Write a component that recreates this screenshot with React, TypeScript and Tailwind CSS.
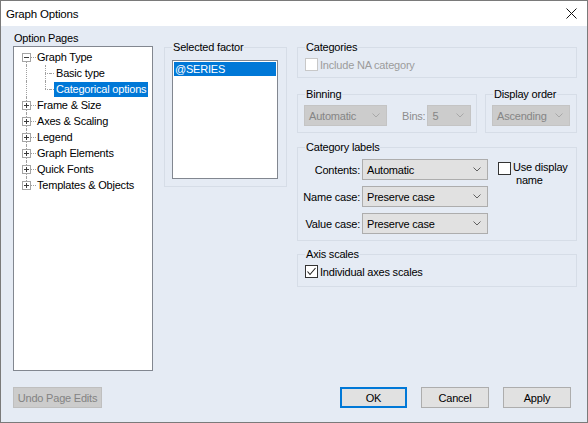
import clsx from 'clsx';

type TreeItem = { label: string; expanded?: boolean };

const topItems: TreeItem[] = [
  { label: 'Graph Type', expanded: true },
  { label: 'Frame & Size' },
  { label: 'Axes & Scaling' },
  { label: 'Legend' },
  { label: 'Graph Elements' },
  { label: 'Quick Fonts' },
  { label: 'Templates & Objects' },
];

const childItems = ['Basic type', 'Categorical options'];

function ExpandBox({ open }: { open?: boolean }) {
  return (
    <div className="relative z-10 flex h-[9px] w-[9px] items-center justify-center border border-[#a5a5a5] bg-white">
      <span className="absolute h-px w-[5px] bg-[#3c3c3c]" />
      {!open && <span className="absolute h-[5px] w-px bg-[#3c3c3c]" />}
    </div>
  );
}

function VLine({ top, bottom }: { top?: boolean; bottom?: boolean }) {
  return (
    <span
      className={clsx(
        'absolute left-[4px] w-0 border-l border-dotted border-[#a0a0a0]',
        top ? 'top-1/2' : 'top-0',
        bottom ? 'bottom-1/2' : 'bottom-0',
      )}
    />
  );
}

function Tree() {
  return (
    <div className="h-[325px] w-[140px] border border-[#828790] bg-white pt-[2px]">
      {topItems.map((item, i) => (
        <div key={item.label}>
          <div className="flex h-[16px] items-center pl-[8px]">
            <div className="relative flex h-full w-[9px] items-center justify-center">
              <VLine top={i === 0} bottom={i === topItems.length - 1} />
              <ExpandBox open={item.expanded} />
            </div>
            <div className="w-[5px] border-t border-dotted border-[#a0a0a0]" />
            <span className="px-px leading-[16px]">{item.label}</span>
          </div>
          {item.expanded &&
            childItems.map((c, j) => {
              const selected = j === childItems.length - 1;
              return (
                <div key={c} className="flex h-[16px] items-center pl-[8px]">
                  <div className="relative h-full w-[9px]">
                    <VLine />
                  </div>
                  <div className="w-[10px]" />
                  <div className="relative flex h-full w-[9px] items-center">
                    <VLine bottom={selected} />
                    <span className="ml-[4px] w-[5px] border-t border-dotted border-[#a0a0a0]" />
                  </div>
                  <div className="w-[4px] border-t border-dotted border-[#a0a0a0]" />
                  <span
                    className={clsx(
                      'h-[15px] px-[2px] leading-[15px]',
                      selected && 'bg-[#0078d7] text-white',
                    )}
                  >
                    {c}
                  </span>
                </div>
              );
            })}
        </div>
      ))}
    </div>
  );
}

function CheckBox({ checked, disabled }: { checked?: boolean; disabled?: boolean }) {
  return (
    <div
      className={clsx(
        'flex h-[13px] w-[13px] shrink-0 items-center justify-center border bg-white',
        disabled ? 'border-[#c8c8c8]' : 'border-[#333333]',
      )}
    >
      {checked && (
        <svg width="11" height="11" viewBox="0 0 11 11">
          <polyline points="1.5,5.5 4,8.5 9.5,2" fill="none" stroke="#222" strokeWidth="1.1" />
        </svg>
      )}
    </div>
  );
}

function Combo({ value, className, disabled }: { value: string; className: string; disabled?: boolean }) {
  return (
    <div
      className={clsx(
        'flex h-[21px] shrink-0 items-center justify-between border pl-[4px] pr-[6px]',
        disabled ? 'border-[#c4c4c4] bg-[#cccccc] text-[#858585]' : 'border-[#adadad] bg-[#e1e1e1] text-black',
        className,
      )}
    >
      <span className="leading-[16px]">{value}</span>
      <svg width="8" height="5" viewBox="0 0 8 5">
        <polyline
          points="0.5,0.5 4,4 7.5,0.5"
          fill="none"
          stroke={disabled ? '#a8a8a8' : '#606060'}
          strokeWidth="1"
        />
      </svg>
    </div>
  );
}

function Legend({ children }: { children: React.ReactNode }) {
  return <legend className="ml-[7px] px-px leading-[16px]">{children}</legend>;
}

function Button({
  label,
  className,
  disabled,
  primary,
}: {
  label: string;
  className: string;
  disabled?: boolean;
  primary?: boolean;
}) {
  return (
    <button
      type="button"
      className={clsx(
        'flex h-[21px] items-center justify-center border leading-[16px]',
        disabled && 'border-[#bfbfbf] bg-[#cccccc] text-[#838383]',
        !disabled && primary && 'border-[#0078d7] bg-[#e1e1e1] text-black shadow-[inset_0_0_0_1px_#0078d7]',
        !disabled && !primary && 'border-[#adadad] bg-[#e1e1e1] text-black',
        className,
      )}
    >
      {label}
    </button>
  );
}

export default function App() {
  return (
    <div className="flex h-[423px] w-[588px] flex-col overflow-hidden border border-[#7a7a7a] bg-[#e5ebf4] font-['Liberation_Sans',Arial,sans-serif] text-[11px] tracking-[-0.2px] text-black">
      {/* title bar */}
      <div className="flex h-[25px] shrink-0 items-center justify-between bg-white pl-[5px] pr-[10px]">
        <span className="text-[11.5px] leading-[16px]">Graph Options</span>
        <svg width="11" height="11" viewBox="0 0 11 11">
          <path d="M0.5 0.5 L10.5 10.5 M10.5 0.5 L0.5 10.5" stroke="#111" strokeWidth="1" />
        </svg>
      </div>

      <div className="flex flex-1 flex-col pl-[12px]">
        <div className="flex items-start">
          {/* option pages */}
          <div className="mt-[4px] flex w-[140px] flex-col">
            <span className="pl-px leading-[16px]">Option Pages</span>
            <Tree />
          </div>

          {/* selected factor */}
          <fieldset className="ml-[11px] mt-[13px] h-[148px] w-[123px] border border-[#d6dde7]">
            <Legend>Selected factor</Legend>
            <div className="ml-[7px] mt-[5px] h-[119px] w-[106px] border border-[#828790] bg-white p-px">
              <div className="h-[14px] bg-[#0078d7] pl-px leading-[14px] text-white">@SERIES</div>
            </div>
          </fieldset>

          {/* right side */}
          <div className="ml-[10px] mt-[13px] flex w-[280px] flex-col">
            <fieldset className="h-[39px] border border-[#d6dde7]">
              <Legend>Categories</Legend>
              <div className="mt-[3px] flex h-[13px] items-center pl-[7px]">
                <CheckBox disabled />
                <span className="ml-[2px] leading-[16px] text-[#9c9c9c]">Include NA category</span>
              </div>
            </fieldset>

            <div className="mt-[8px] flex gap-[8px]">
              <fieldset className="h-[47px] w-[180px] border border-[#d6dde7]">
                <Legend>Binning</Legend>
                <div className="mt-[3px] flex items-center pl-[6px]">
                  <Combo value="Automatic" className="w-[83px]" disabled />
                  <span className="ml-[15px] leading-[16px] text-[#8d8d8d]">Bins:</span>
                  <Combo value="5" className="ml-[2px] w-[44px]" disabled />
                </div>
              </fieldset>
              <fieldset className="h-[47px] flex-1 border border-[#d6dde7]">
                <Legend>Display order</Legend>
                <div className="mt-[3px] pl-[6px]">
                  <Combo value="Ascending" className="w-[78px]" disabled />
                </div>
              </fieldset>
            </div>

            <fieldset className="mt-[6px] h-[102px] border border-[#d6dde7]">
              <Legend>Category labels</Legend>
              <div className="mt-[4px] flex items-start">
                <div className="flex flex-col gap-[6px]">
                  {[
                    ['Contents:', 'Automatic'],
                    ['Name case:', 'Preserve case'],
                    ['Value case:', 'Preserve case'],
                  ].map(([l, v]) => (
                    <div key={l} className="flex items-center">
                      <span className="w-[62px] text-right leading-[16px]">{l}</span>
                      <Combo value={v} className="ml-[2px] w-[126px]" />
                    </div>
                  ))}
                </div>
                <div className="ml-[10px] mt-[3px] flex items-start">
                  <CheckBox />
                  <span className="ml-[2px] mt-[-1px] leading-[13px]">
                    Use display
                    <br />
                    <span className="pl-[3px]">name</span>
                  </span>
                </div>
              </div>
            </fieldset>

            <fieldset className="mt-[5px] h-[41px] border border-[#d6dde7]">
              <Legend>Axis scales</Legend>
              <div className="mt-[3px] flex h-[13px] items-center pl-[7px]">
                <CheckBox checked />
                <span className="ml-[2px] leading-[16px]">Individual axes scales</span>
              </div>
            </fieldset>
          </div>
        </div>

        {/* buttons */}
        <div className="mt-[16px] flex items-center pr-[16px]">
          <Button label="Undo Page Edits" className="w-[89px]" disabled />
          <div className="flex-1" />
          <Button label="OK" className="w-[67px]" primary />
          <Button label="Cancel" className="ml-[14px] w-[68px]" />
          <Button label="Apply" className="ml-[14px] w-[68px]" />
        </div>
      </div>
    </div>
  );
}
